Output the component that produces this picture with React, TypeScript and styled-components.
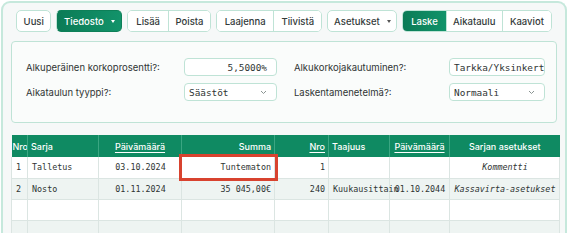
import React from 'react';
import styled, { createGlobalStyle, css } from 'styled-components';

const GlobalStyle = createGlobalStyle`
  html, body {
    margin: 0;
    padding: 0;
    background: #ffffff;
    font-family: Inter, "Noto Sans", "Liberation Sans", sans-serif;
  }
  * { box-sizing: border-box; }
`;

const green = '#0f8a62';
const line = '#bfe3d6';
const mono = '"DejaVu Sans Mono", "Liberation Mono", monospace';

const Frame = styled.div`
  margin: 1px 3px 0 1px;
  height: 250px;
  border: 2px solid #c6e8dc;
  border-bottom: none;
  border-radius: 9px 9px 0 0;
  background: #f6f8f8;
  padding: 7px 8px 0 8px;
  overflow: hidden;
`;

const Toolbar = styled.div`
  display: flex;
  gap: 5px;
  height: 22px;
  padding: 0 5px;
`;

const Group = styled.div`
  display: flex;
  border: 1px solid ${line};
  border-radius: 5px;
  background: #ffffff;
  overflow: hidden;
`;

const Button = styled.button<{ $primary?: boolean; $w: number; $solo?: boolean }>`
  width: ${(p) => p.$w}px;
  height: 100%;
  padding: 0;
  display: flex;
  align-items: center;
  justify-content: center;
  gap: 7px;
  font-family: inherit;
  font-size: 9.5px;
  font-weight: 500;
  color: #333a39;
  background: #ffffff;
  border: none;
  & + & { border-left: 1px solid ${line}; }

  ${(p) => p.$solo && css`
    border: 1px solid ${line};
    border-radius: 5px;
  `}

  ${(p) => p.$primary && css`
    color: #ffffff;
    background: linear-gradient(90deg, #0b7b56, #12936a);
    border-color: #0d8058;
  `}
`;

const Caret = styled.span<{ $light?: boolean }>`
  width: 0;
  height: 0;
  border-left: 2.5px solid transparent;
  border-right: 2.5px solid transparent;
  border-top: 3px solid ${(p) => (p.$light ? '#ffffff' : '#555')};
`;

const Panel = styled.div`
  margin-top: 9px;
  height: 82px;
  border: 1px solid ${line};
  border-radius: 4px;
  background: #fafcfb;
  padding: 16px 14px 0 14px;
`;

const Form = styled.div`
  display: grid;
  grid-template-columns: 158px 93px 172px 96px;
  grid-auto-rows: 18px;
  row-gap: 7px;
  align-items: center;
`;

const Label = styled.label<{ $indent?: boolean }>`
  font-size: 9.5px;
  color: #2f3534;
  padding-left: ${(p) => (p.$indent ? '17px' : '0')};
`;

const Field = styled.div<{ $align?: 'left' | 'right' }>`
  height: 18px;
  border: 1px solid ${line};
  border-radius: 4px;
  background: #ffffff;
  display: flex;
  align-items: center;
  justify-content: ${(p) => (p.$align === 'right' ? 'flex-end' : 'space-between')};
  padding: 0 9px 0 4px;
  font-family: ${mono};
  font-size: 9.4px;
  color: #2f3534;
  white-space: nowrap;
  overflow: hidden;
`;

const Chevron = () => (
  <svg width="7" height="5" viewBox="0 0 7 5" fill="none">
    <path d="M1 1l2.5 2.5L6 1" stroke="#8a9492" strokeWidth="1" />
  </svg>
);

const Table = styled.table`
  margin-top: 12px;
  width: 548px;
  border-collapse: collapse;
  table-layout: fixed;
  font-size: 9px;
`;

const Th = styled.th<{ $align?: string; $link?: boolean }>`
  height: 22px;
  background: ${green};
  color: #ffffff;
  font-weight: 500;
  text-align: ${(p) => p.$align || 'left'};
  padding: 0 3px;
  border-left: 1px solid #3aa682;
  white-space: nowrap;
  overflow: hidden;
  &:first-child { border-left: none; padding: 0 1px; }
  ${(p) => p.$link && css`
    text-decoration: underline;
    text-underline-offset: 2px;
  `}
`;

const Row = styled.tr<{ $alt?: boolean }>`
  background: ${(p) => (p.$alt ? '#eef4f2' : '#ffffff')};
`;

const Td = styled.td<{ $align?: string; $italic?: boolean; $marked?: boolean }>`
  height: 21px;
  padding: 0 3px 0 4px;
  font-family: ${mono};
  font-size: 8.4px;
  color: #2f3534;
  text-align: ${(p) => p.$align || 'left'};
  font-style: ${(p) => (p.$italic ? 'italic' : 'normal')};
  border: 1px solid #dbe5e2;
  border-top: none;
  white-space: nowrap;
  ${(p) => p.$marked && css`
    outline: 3px solid #d8432f;
    outline-offset: 0;
    position: relative;
    z-index: 1;
  `}
`;

type Cell = { text: string; align?: string; italic?: boolean; marked?: boolean };

const rows: Cell[][] = [
  [
    { text: '1' },
    { text: 'Talletus' },
    { text: '03.10.2024', align: 'center' },
    { text: 'Tuntematon', align: 'right', marked: true },
    { text: '1', align: 'right' },
    { text: '' },
    { text: '' },
    { text: 'Kommentti', align: 'center', italic: true },
  ],
  [
    { text: '2' },
    { text: 'Nosto' },
    { text: '01.11.2024', align: 'center' },
    { text: '35 045,00€', align: 'right' },
    { text: '240', align: 'right' },
    { text: 'Kuukausittain' },
    { text: '01.10.2044', align: 'center' },
    { text: 'Kassavirta-asetukset', align: 'center', italic: true },
  ],
  Array.from({ length: 8 }, () => ({ text: '' })),
  Array.from({ length: 8 }, () => ({ text: '' })),
];

const widths = [16, 71, 83, 93, 54, 61, 60, 110];

export default function App() {
  return (
    <>
      <GlobalStyle />
      <Frame>
        <Toolbar>
          <Button $solo $w={36}>Uusi</Button>
          <Button $solo $primary $w={67}>
            Tiedosto <Caret $light />
          </Button>
          <Group>
            <Button $w={40}>Lisää</Button>
            <Button $w={43}>Poista</Button>
          </Group>
          <Group>
            <Button $w={57}>Laajenna</Button>
            <Button $w={49}>Tiivistä</Button>
          </Group>
          <Button $solo $w={71}>
            Asetukset <Caret />
          </Button>
          <Group>
            <Button $primary $w={43}>Laske</Button>
            <Button $w={57}>Aikataulu</Button>
            <Button $w={50}>Kaaviot</Button>
          </Group>
        </Toolbar>

        <Panel>
          <Form>
            <Label>Alkuperäinen korkoprosentti?:</Label>
            <Field $align="right">5,5000%</Field>
            <Label $indent>Alkukorkojakautuminen?:</Label>
            <Field>Tarkka/Yksinkertainen</Field>
            <Label>Aikataulun tyyppi?:</Label>
            <Field>
              Säästöt <Chevron />
            </Field>
            <Label $indent>Laskentamenetelmä?:</Label>
            <Field>
              Normaali <Chevron />
            </Field>
          </Form>
        </Panel>

        <Table>
          <colgroup>
            {widths.map((w, i) => (
              <col key={i} style={{ width: w }} />
            ))}
          </colgroup>
          <thead>
            <tr>
              <Th>Nro</Th>
              <Th>Sarja</Th>
              <Th $align="center" $link>Päivämäärä</Th>
              <Th $align="right">Summa</Th>
              <Th $align="right" $link>Nro</Th>
              <Th>Taajuus</Th>
              <Th $align="center" $link>Päivämäärä</Th>
              <Th $align="center">Sarjan asetukset</Th>
            </tr>
          </thead>
          <tbody>
            {rows.map((cells, r) => (
              <Row key={r} $alt={r % 2 === 1}>
                {cells.map((c, i) => (
                  <Td key={i} $align={c.align} $italic={c.italic} $marked={c.marked}>
                    {c.text}
                  </Td>
                ))}
              </Row>
            ))}
          </tbody>
        </Table>
      </Frame>
    </>
  );
}
